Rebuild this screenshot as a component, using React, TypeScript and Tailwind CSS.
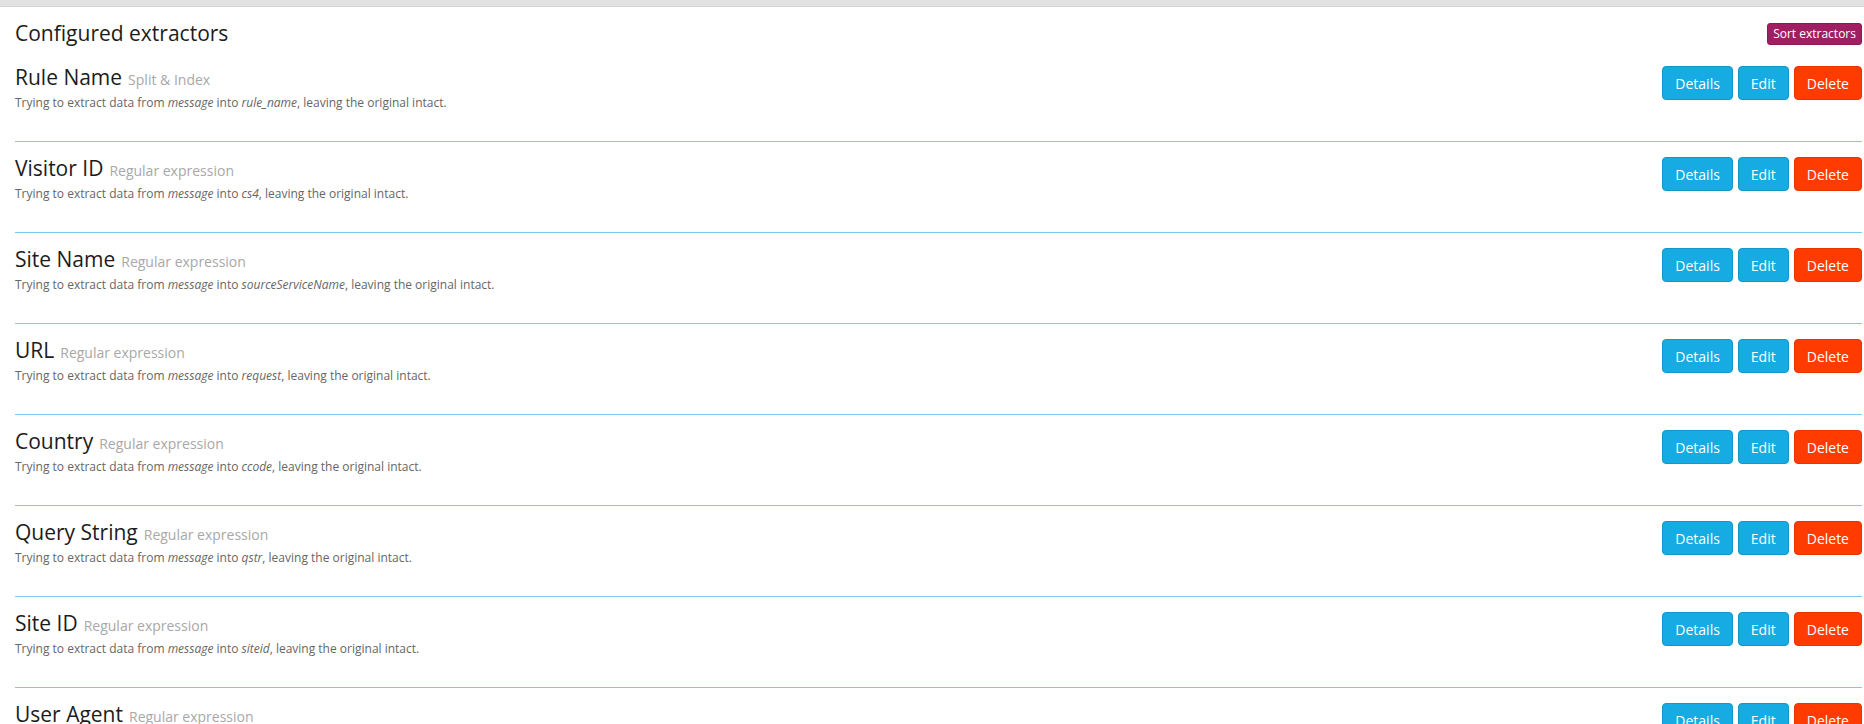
const extractors = [
  { title: 'Rule Name', type: 'Split & Index', target: 'rule_name' },
  { title: 'Visitor ID', type: 'Regular expression', target: 'cs4' },
  { title: 'Site Name', type: 'Regular expression', target: 'sourceServiceName' },
  { title: 'URL', type: 'Regular expression', target: 'request' },
  { title: 'Country', type: 'Regular expression', target: 'ccode' },
  { title: 'Query String', type: 'Regular expression', target: 'qstr' },
  { title: 'Site ID', type: 'Regular expression', target: 'siteid' },
  { title: 'User Agent', type: 'Regular expression', target: 'useragent' },
]

function ExtractorRow({ title, type, target }: { title: string; type: string; target: string }) {
  return (
    <div className="flex items-start justify-between h-[91px] shrink-0 border-b border-[#7ccbef]">
      <div className="pt-[14px]">
        <div className="flex items-baseline gap-[6px] leading-[24px]">
          <span className="text-[21px] text-[#1c1c1c]">{title}</span>
          <span className="text-[14px] text-[#a8a8a8]">{type}</span>
        </div>
        <p className="text-[12px] leading-[17px] text-[#666] mt-[2px]">
          Trying to extract data from <em>message</em> into <em>{target}</em>, leaving the original intact.
        </p>
      </div>
      <div className="flex gap-[5px] mt-[15px]">
        <button className="h-[34px] px-[12px] rounded-[4px] border border-[#1496c6] bg-[#16ace3] text-white text-[14px]">
          Details
        </button>
        <button className="h-[34px] px-[12px] rounded-[4px] border border-[#1496c6] bg-[#16ace3] text-white text-[14px]">
          Edit
        </button>
        <button className="h-[34px] px-[12px] rounded-[4px] border border-[#e63500] bg-[#ff3b00] text-white text-[14px]">
          Delete
        </button>
      </div>
    </div>
  )
}

export default function App() {
  return (
    <div className="h-[724px] overflow-hidden bg-white font-['Open_Sans',sans-serif]">
      <div className="h-[7px] bg-[#e2e2e2] border-b border-[#d4d4d4]" />
      <div className="pl-[15px] pr-[2px]">
        <div className="flex items-start justify-between h-[44px]">
          <h2 className="text-[21px] leading-[24px] text-[#1c1c1c] mt-[14px]">Configured extractors</h2>
          <button className="mt-[16px] h-[22px] px-[5px] rounded-[3px] border border-[#8c1a56] bg-[#a01f63] text-white text-[12px] leading-[18px]">
            Sort extractors
          </button>
        </div>
        {extractors.map(e => (
          <ExtractorRow key={e.title} {...e} />
        ))}
      </div>
    </div>
  )
}
